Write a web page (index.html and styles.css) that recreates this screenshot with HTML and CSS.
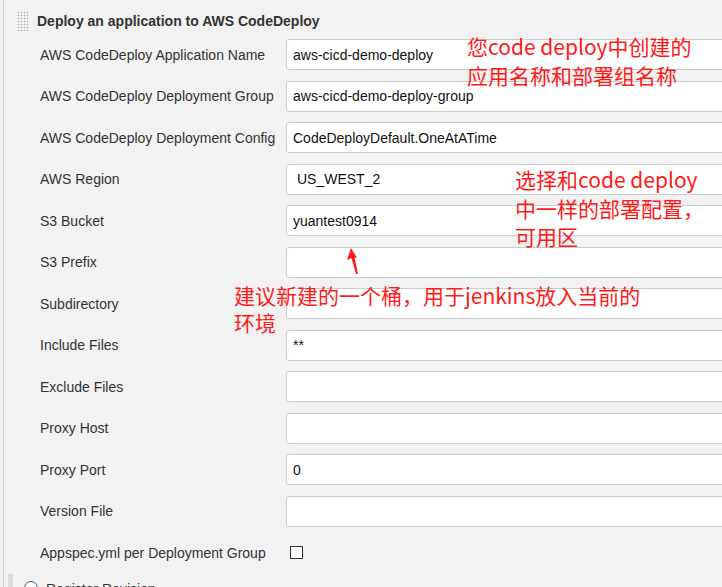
FILE: index.html
```html
<!DOCTYPE html>
<html>
<head>
<meta charset="utf-8">
<link rel="stylesheet" href="styles.css">
</head>
<body>
<div class="frame">
  <div class="section">
    <div class="section-head">
      <span class="grip"></span>
      <span class="title">Deploy an application to AWS CodeDeploy</span>
    </div>
    <div class="form">
      <div class="row"><label class="lbl">AWS CodeDeploy Application Name</label><div class="field"><input class="inp" value="aws-cicd-demo-deploy"></div></div>
      <div class="row"><label class="lbl">AWS CodeDeploy Deployment Group</label><div class="field"><input class="inp" value="aws-cicd-demo-deploy-group"></div></div>
      <div class="row"><label class="lbl">AWS CodeDeploy Deployment Config</label><div class="field"><input class="inp" value="CodeDeployDefault.OneAtATime"></div></div>
      <div class="row"><label class="lbl">AWS Region</label><div class="field"><div class="inp select">US_WEST_2</div></div></div>
      <div class="row"><label class="lbl">S3 Bucket</label><div class="field"><input class="inp" value="yuantest0914"></div></div>
      <div class="row"><label class="lbl">S3 Prefix</label><div class="field"><input class="inp" value=""></div></div>
      <div class="row"><label class="lbl">Subdirectory</label><div class="field"><input class="inp" value=""></div></div>
      <div class="row"><label class="lbl">Include Files</label><div class="field"><input class="inp" value="**"></div></div>
      <div class="row"><label class="lbl">Exclude Files</label><div class="field"><input class="inp" value=""></div></div>
      <div class="row"><label class="lbl">Proxy Host</label><div class="field"><input class="inp" value=""></div></div>
      <div class="row"><label class="lbl">Proxy Port</label><div class="field"><input class="inp" value="0"></div></div>
      <div class="row"><label class="lbl">Version File</label><div class="field"><input class="inp" value=""></div></div>
      <div class="row"><label class="lbl">Appspec.yml per Deployment Group</label><div class="field"><span class="check"></span></div></div>
    </div>
  </div>
  <div class="next">
    <span class="radio"></span><span class="next-label">Register Revision</span>
  </div>

  <div class="note note1">您code deploy中创建的<br>应用名称和部署组名称</div>
  <div class="note note2">选择和code deploy<br>中一样的部署配置，<br>可用区</div>
  <div class="note note3">建议新建的一个桶，用于jenkins放入当前的<br>环境</div>
  <svg class="arrow" width="20" height="32" viewBox="0 0 20 32">
    <polygon points="5,1 11,11 8.5,10.5 12,27 10,27 5.5,11 1,13" fill="#ff1a1a"/>
  </svg>
</div>
</body>
</html>
```
FILE: styles.css
```css
html, body {
  margin: 0;
  padding: 0;
  background: #f2f2f2;
  overflow: hidden;
  width: 722px;
  height: 587px;
}
body {
  font-family: "Liberation Sans", Arial, sans-serif;
  color: #333;
}
.frame {
  position: relative;
  margin-left: 3px;
  border-left: 1px solid #d0d0d0;
  height: 587px;
  overflow: hidden;
}
.section {
  padding-top: 10px;
}
.section-head {
  display: flex;
  align-items: center;
  padding-left: 13px;
  height: 22px;
}
.grip {
  width: 12px;
  height: 20px;
  background-image: radial-gradient(circle, #b8b8b8 0.9px, transparent 1.1px);
  background-size: 3px 3px;
  background-color: #fafafa;
  margin-right: 8px;
}
.title {
  font-weight: bold;
  font-size: 14px;
  color: #333;
}
.form {
  padding-top: 2px;
}
.row {
  display: flex;
  align-items: center;
  height: 41.5px;
  width: 900px;
}
.lbl {
  width: 282px;
  padding-left: 36px;
  box-sizing: border-box;
  font-size: 14px;
  color: #333;
  white-space: nowrap;
  flex: none;
}
.field {
  flex: none;
  width: 500px;
  display: flex;
  align-items: center;
}
.inp {
  box-sizing: border-box;
  width: 500px;
  height: 31px;
  border: 1px solid #cccccc;
  border-radius: 3px;
  background: #fff;
  font-family: "Liberation Sans", Arial, sans-serif;
  font-size: 14px;
  color: #111;
  padding: 0 6px;
  outline: none;
}
.select {
  display: flex;
  align-items: center;
  padding-left: 10px;
}
.check {
  display: block;
  width: 11px;
  height: 11px;
  border: 1px solid #333;
  background: #fff;
  margin-left: 4px;
}
.next {
  display: flex;
  align-items: flex-start;
  margin-left: 4px;
  border-left: 5px solid #dcdcdc;
  height: 40px;
  padding-left: 11px;
  padding-top: 7px;
  box-sizing: border-box;
}
.radio {
  flex: none;
  width: 12px;
  height: 12px;
  border: 1px solid #555;
  border-radius: 50%;
  background: #fff;
  margin-right: 8px;
}
.next-label {
  font-size: 14px;
  line-height: 16px;
  color: #333;
}
.note {
  position: absolute;
  color: #ff1a1a;
  font-family: "Noto Sans CJK SC", "Noto Sans", sans-serif;
  font-size: 21px;
  line-height: 29px;
  white-space: nowrap;
}
.note1 { left: 463px; top: 32px; }
.note2 { left: 511px; top: 165px; line-height: 28.5px; }
.note3 { left: 230px; top: 282px; line-height: 27px; }
.arrow {
  position: absolute;
  left: 342px;
  top: 247px;
}
```
